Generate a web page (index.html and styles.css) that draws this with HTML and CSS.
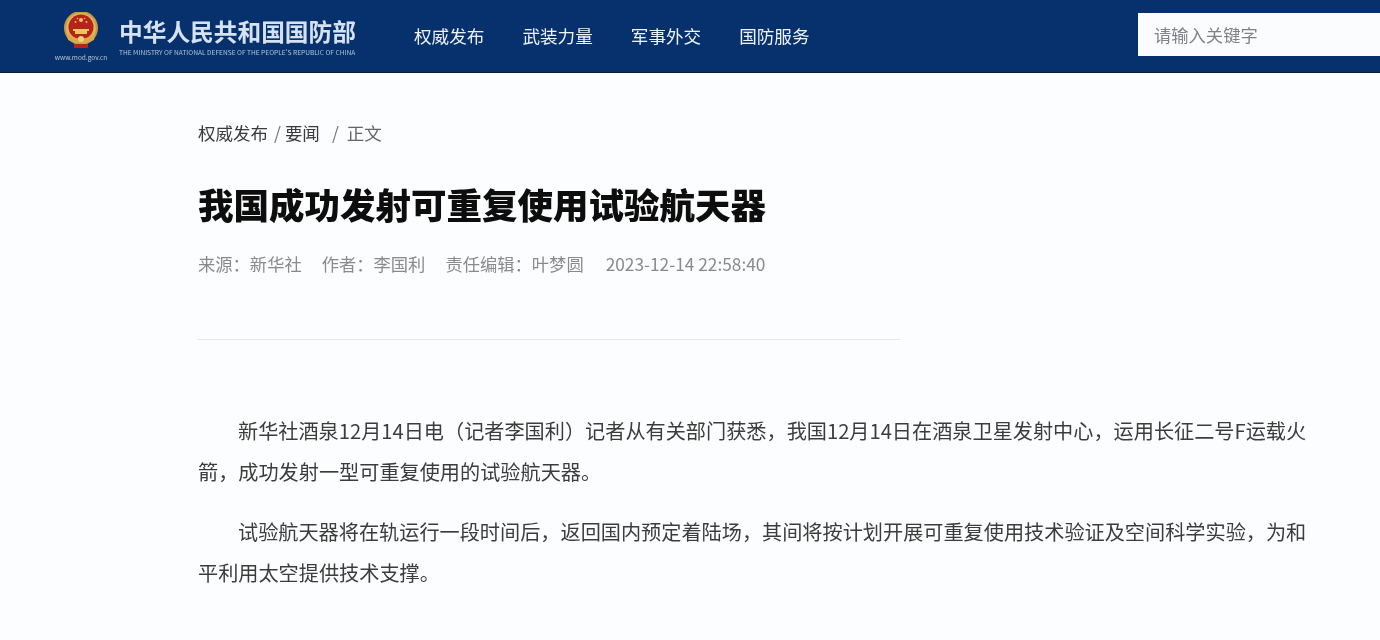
FILE: index.html
```html
<!DOCTYPE html>
<html lang="zh-CN">
<head>
<meta charset="utf-8">
<title>我国成功发射可重复使用试验航天器</title>
<link rel="stylesheet" href="styles.css">
</head>
<body>
<header class="topbar">
  <div class="brand">
    <div class="emblem">
      <svg class="emblem-icon" viewBox="0 0 36 38" width="36" height="38" aria-hidden="true">
        <circle cx="18" cy="16" r="17" fill="#c79a45"/>
        <circle cx="18" cy="16" r="15" fill="#e0b45a"/>
        <circle cx="18" cy="15" r="12.5" fill="#b5231c"/>
        <circle cx="18" cy="8" r="2" fill="#edc55f"/>
        <circle cx="12.5" cy="10" r="1" fill="#edc55f"/>
        <circle cx="23.5" cy="10" r="1" fill="#edc55f"/>
        <circle cx="14.5" cy="6.5" r=".8" fill="#edc55f"/>
        <circle cx="21.5" cy="6.5" r=".8" fill="#edc55f"/>
        <path d="M10 17h16v2h-2v3h-12v-3h-2z" fill="#edc55f"/>
        <path d="M4 22 Q18 31 32 22 L31 28 Q18 35 5 28 Z" fill="#d9a94c"/>
        <circle cx="18" cy="27" r="3" fill="#efd27a"/>
        <rect x="11" y="32" width="14" height="4" fill="#b5231c"/>
      </svg>
      <span class="emblem-url">www.mod.gov.cn</span>
    </div>
    <div class="brand-text">
      <div class="brand-name">中华人民共和国国防部</div>
      <div class="brand-en">THE MINISTRY OF NATIONAL DEFENSE OF THE PEOPLE'S REPUBLIC OF CHINA</div>
    </div>
  </div>
  <nav class="nav">
    <a>权威发布</a>
    <a>武装力量</a>
    <a>军事外交</a>
    <a>国防服务</a>
  </nav>
  <div class="search">请输入关键字</div>
</header>
<main class="article">
  <div class="crumbs"><span>权威发布</span><i>/</i><span>要闻</span><i class="wide">/</i><span class="light">正文</span></div>
  <h1>我国成功发射可重复使用试验航天器</h1>
  <div class="meta">
    <span>来源：新华社</span>
    <span>作者：李国利</span>
    <span>责任编辑：叶梦圆</span>
    <span class="date">2023-12-14 22:58:40</span>
  </div>
  <hr class="rule">
  <p>新华社酒泉12月14日电（记者李国利）记者从有关部门获悉，我国12月14日在酒泉卫星发射中心，运用长征二号F运载火箭，成功发射一型可重复使用的试验航天器。</p>
  <p>试验航天器将在轨运行一段时间后，返回国内预定着陆场，其间将按计划开展可重复使用技术验证及空间科学实验，为和平利用太空提供技术支撑。</p>
</main>
</body>
</html>
```
FILE: styles.css
```css
* { box-sizing: border-box; }
html, body { margin: 0; height: 640px; overflow: hidden; }
body {
  background: #fcfdfe;
  color: #333;
  font-family: "Noto Sans CJK SC", "Liberation Sans", sans-serif;
}
.topbar {
  height: 73px;
  background: #06316c;
  border-bottom: 1px solid #0a1f3f;
  display: flex;
  align-items: flex-start;
  padding-left: 54px;
  filter: blur(.35px);
}
.brand { display: flex; align-items: flex-start; width: 360px; padding-top: 12px; }
.emblem { width: 54px; display: flex; flex-direction: column; align-items: center; gap: 4px; margin-right: 11px; }
.emblem-icon { display: block; }
.emblem-url { font-size: 6.5px; color: #b9c6d8; white-space: nowrap; line-height: 7px; }
.brand-text { display: flex; flex-direction: column; gap: 2px; padding-top: 4px; }
.brand-name { font-size: 23.7px; line-height: 30px; font-weight: 700; color: #d6e2f2; white-space: nowrap; }
.brand-en { font-size: 6.6px; line-height: 8px; color: #b4c3d8; white-space: nowrap; }
.nav { display: flex; gap: 38px; padding-top: 23px; }
.nav a { font-size: 17.6px; line-height: 26px; color: #eef3f9; white-space: nowrap; }
.search {
  margin-left: auto;
  margin-top: 13px;
  width: 242px;
  height: 43px;
  background: #fbfcfe;
  color: #7f8287;
  font-size: 17.3px;
  line-height: 43px;
  padding-left: 16px;
}
.article { width: 1112px; margin-left: 198px; filter: blur(.35px); }
.crumbs { margin-top: 48px; font-size: 17.5px; line-height: 24px; display: flex; color: #3a3a3a; }
.crumbs i { font-style: normal; margin: 0 4px 0 6px; color: #777; }
.crumbs i.wide { margin: 0 8px 0 12px; }
.crumbs .light { color: #666; }
h1 { margin: 35px 0 0; font-size: 35.5px; line-height: 48px; font-weight: 900; color: #0d0d0d; }
.meta { margin-top: 25px; display: flex; gap: 20px; font-size: 17.3px; line-height: 22px; color: #8a8a8a; }
.date { margin-left: 2px; }
.rule { margin: 64px 0 0; width: 702px; height: 1px; border: 0; background: #e4e6e8; }
p { margin: 0; font-size: 20.17px; line-height: 41px; text-indent: 40px; color: #3c3c3c; }
.rule + p { margin-top: 70px; }
p + p { margin-top: 19px; }
```
